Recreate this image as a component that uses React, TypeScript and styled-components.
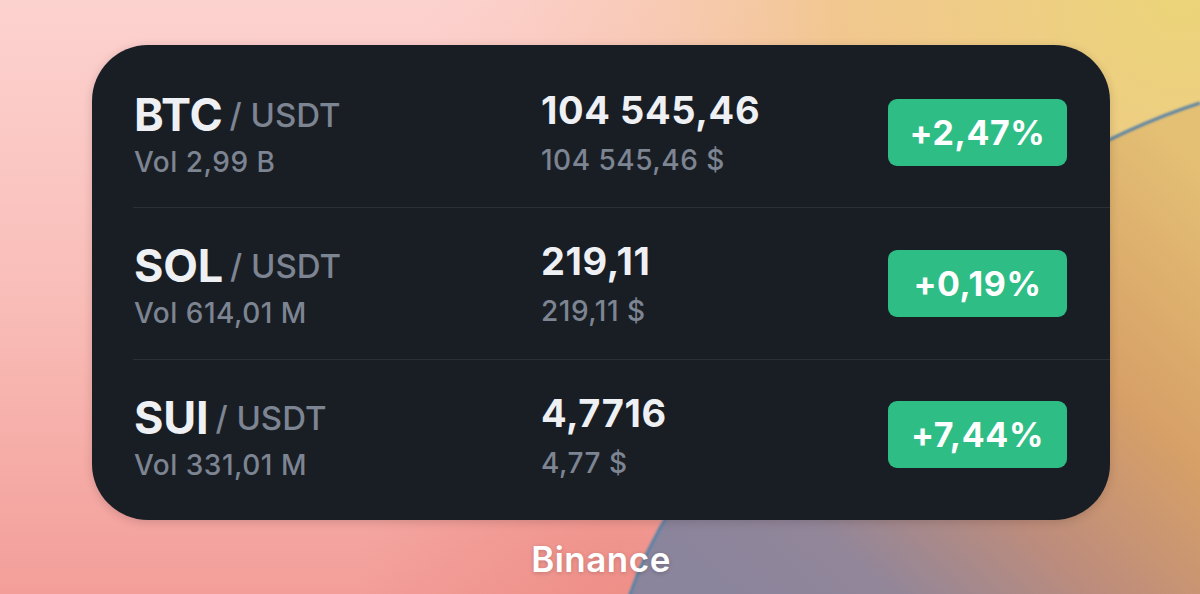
import React from "react";
import styled, {createGlobalStyle} from "styled-components";

type Pair = {
	base: string;
	quote: string;
	volume: string;
	price: string;
	fiat: string;
	change: string;
};

const pairs: Pair[] = [
	{base: "BTC", quote: "USDT", volume: "Vol 2,99 B", price: "104 545,46", fiat: "104 545,46 $", change: "+2,47%"},
	{base: "SOL", quote: "USDT", volume: "Vol 614,01 M", price: "219,11", fiat: "219,11 $", change: "+0,19%"},
	{base: "SUI", quote: "USDT", volume: "Vol 331,01 M", price: "4,7716", fiat: "4,77 $", change: "+7,44%"},
];

// wallpaper behind the widget: soft gradients and one big arc
const WallpaperArt = () => (
	<Art viewBox="0 0 1200 594" preserveAspectRatio="none">
		<defs>
			<linearGradient id="base" x1="0" y1="0" x2="0" y2="594" gradientUnits="userSpaceOnUse">
				<stop offset="0" stopColor="#fcd2cf" />
				<stop offset="0.5" stopColor="#f9bdb8" />
				<stop offset="1" stopColor="#f39e99" />
			</linearGradient>
			<radialGradient id="sun" cx="1180" cy="0" r="760" gradientUnits="userSpaceOnUse">
				<stop offset="0" stopColor="#ebd479" stopOpacity="1" />
				<stop offset="0.45" stopColor="#f0c688" stopOpacity="0.9" />
				<stop offset="0.8" stopColor="#f6c2a6" stopOpacity="0.35" />
				<stop offset="1" stopColor="#f8c4b4" stopOpacity="0" />
			</radialGradient>
			<radialGradient id="blush" cx="620" cy="594" r="260" gradientUnits="userSpaceOnUse">
				<stop offset="0" stopColor="#ec8880" stopOpacity="0.7" />
				<stop offset="1" stopColor="#ec8880" stopOpacity="0" />
			</radialGradient>
			<linearGradient id="inner" x1="1160" y1="120" x2="720" y2="594" gradientUnits="userSpaceOnUse">
				<stop offset="0" stopColor="#e4c074" />
				<stop offset="0.35" stopColor="#d7a067" />
				<stop offset="0.6" stopColor="#bd8c7c" />
				<stop offset="0.82" stopColor="#928699" />
				<stop offset="1" stopColor="#8a849c" />
			</linearGradient>
			<filter id="soft">
				<feGaussianBlur stdDeviation="0.8" />
			</filter>
		</defs>
		<rect width="1200" height="594" fill="url(#base)" />
		<rect width="1200" height="594" fill="url(#sun)" />
		<rect width="1200" height="594" fill="url(#blush)" />
		<path d="M1200 103 C1020 160 700 380 628 600 L1200 600 Z" fill="url(#inner)" />
		<path d="M1200 103 C1020 160 700 380 628 600" fill="none" stroke="#5a83a6" strokeWidth="3" filter="url(#soft)" />
	</Art>
);

export default function App() {
	return (
		<>
			<GlobalStyle />
			<Wallpaper>
				<WallpaperArt />
				<Widget>
					{pairs.map(pair => (
						<Row key={pair.base}>
							<Symbol>
								<PairLine>
									<Base>{pair.base}</Base>
									<Quote>/ {pair.quote}</Quote>
								</PairLine>
								<Muted>{pair.volume}</Muted>
							</Symbol>
							<PriceCol>
								<Price>{pair.price}</Price>
								<Muted>{pair.fiat}</Muted>
							</PriceCol>
							<Badge>{pair.change}</Badge>
						</Row>
					))}
				</Widget>
				<Label>Binance</Label>
			</Wallpaper>
		</>
	);
}

const GlobalStyle = createGlobalStyle`
	html, body {
		margin: 0;
		padding: 0;
	}
	body {
		font-family: Inter, "Noto Sans", "Liberation Sans", sans-serif;
		-webkit-font-smoothing: antialiased;
	}
`;

const Wallpaper = styled.div`
	position: relative;
	width: 1200px;
	height: 594px;
	overflow: hidden;
	display: flex;
	flex-direction: column;
	align-items: flex-start;
	padding: 45px 0 0 92px;
	box-sizing: border-box;
	background: #f8bdb6;
`;

const Art = styled.svg`
	position: absolute;
	inset: 0;
	width: 100%;
	height: 100%;
	z-index: 0;
`;

const Widget = styled.div`
	position: relative;
	z-index: 1;
	width: 1018px;
	height: 475px;
	box-sizing: border-box;
	padding: 12px 0 10px 41px;
	border-radius: 56px;
	background: #191e25;
	box-shadow: 0 2px 10px rgba(40, 20, 20, 0.18);
	display: flex;
	flex-direction: column;
`;

const Row = styled.div`
	flex: 1;
	display: flex;
	align-items: center;
	padding-right: 43px;
	border-bottom: 1.5px solid #2b3038;

	&:last-child {
		border-bottom: none;
	}
`;

const Symbol = styled.div`
	width: 408px;
	display: flex;
	flex-direction: column;
	gap: 7px;
	padding: 7px 0 0 1px;
	box-sizing: border-box;
`;

const PairLine = styled.div`
	display: flex;
	align-items: center;
	gap: 7px;
	height: 46px;
`;

const Base = styled.span`
	font-size: 45px;
	font-weight: 700;
	color: #eef0f4;
	letter-spacing: -0.2px;
	line-height: 46px;
`;

const Quote = styled.span`
	font-size: 33px;
	font-weight: 500;
	color: #7d8492;
	line-height: 46px;
`;

const Muted = styled.span`
	font-size: 28px;
	font-weight: 500;
	color: #7d8492;
	letter-spacing: 0.5px;
	line-height: 34px;
`;

const PriceCol = styled.div`
	flex: 1;
	display: flex;
	flex-direction: column;
	gap: 11px;
	padding-top: 1px;
`;

const Price = styled.span`
	font-size: 38px;
	font-weight: 700;
	color: #eef0f4;
	letter-spacing: 0.6px;
	line-height: 44px;
`;

const Badge = styled.div`
	width: 179px;
	height: 67px;
	border-radius: 9px;
	background: #2fbd86;
	color: #ffffff;
	font-size: 34px;
	font-weight: 700;
	letter-spacing: 0.6px;
	display: flex;
	align-items: center;
	justify-content: center;
`;

const Label = styled.div`
	position: relative;
	z-index: 1;
	width: 1018px;
	margin-top: 18px;
	text-align: center;
	font-size: 35px;
	font-weight: 600;
	letter-spacing: 0.5px;
	color: #ffffff;
	text-shadow: 0 1px 4px rgba(0, 0, 0, 0.2);
`;
